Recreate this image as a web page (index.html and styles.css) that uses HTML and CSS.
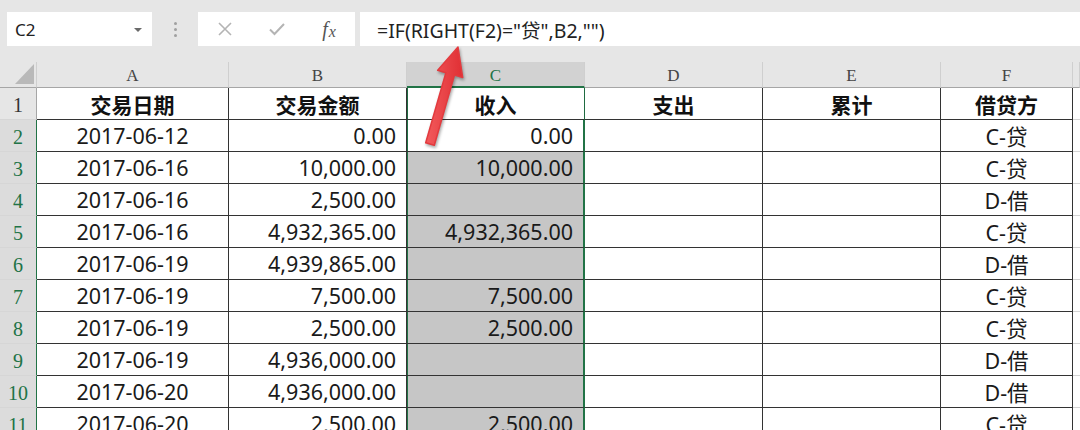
FILE: index.html
```html
<!DOCTYPE html>
<html lang="zh-CN">

<head>
    <meta charset="UTF-8">
    <link rel="stylesheet" href="styles.css">
    <title>借贷方 - 收入公式</title>
</head>

<body>
    <div class="app">
        <div class="toolbar">
            <div class="name-box">
                <span>C2</span>
                <span class="caret"></span>
            </div>
            <div class="grip"><i></i><i></i><i></i></div>
            <div class="fx-buttons">
                <span class="fx-btn">
                    <svg width="16" height="16" viewBox="0 0 16 16">
                        <path d="M2 2 L14 14 M14 2 L2 14" stroke="#b4b4b4" stroke-width="1.6" fill="none" />
                    </svg>
                </span>
                <span class="fx-btn">
                    <svg width="18" height="16" viewBox="0 0 18 16">
                        <path d="M2 8.5 L6.5 13 L16 3" stroke="#b4b4b4" stroke-width="2" fill="none" />
                    </svg>
                </span>
                <span class="fx-btn fx-label"><i>f</i><i class="x">x</i></span>
            </div>
            <div class="formula">=IF(RIGHT(F2)="贷",B2,"")</div>
        </div>

        <div class="sheet">
            <!-- 列标 -->
            <div class="corner"><span class="corner-mark"></span></div>
            <div class="col-head">A</div>
            <div class="col-head">B</div>
            <div class="col-head active">C</div>
            <div class="col-head">D</div>
            <div class="col-head">E</div>
            <div class="col-head">F</div>
            <div class="col-head blank"></div>

            <!-- 1 -->
            <div class="row-head">1</div>
            <div class="cell title">交易日期</div>
            <div class="cell title">交易金额</div>
            <div class="cell title c-col">收入</div>
            <div class="cell title">支出</div>
            <div class="cell title">累计</div>
            <div class="cell title">借贷方</div>
            <div class="cell empty"></div>

            <!-- 2 -->
            <div class="row-head sel">2</div>
            <div class="cell center">2017-06-12</div>
            <div class="cell num">0.00</div>
            <div class="cell num c-col picked current">0.00</div>
            <div class="cell"></div>
            <div class="cell"></div>
            <div class="cell center">C-贷</div>
            <div class="cell empty"></div>

            <!-- 3 -->
            <div class="row-head sel">3</div>
            <div class="cell center">2017-06-16</div>
            <div class="cell num">10,000.00</div>
            <div class="cell num c-col picked">10,000.00</div>
            <div class="cell"></div>
            <div class="cell"></div>
            <div class="cell center">C-贷</div>
            <div class="cell empty"></div>

            <!-- 4 -->
            <div class="row-head sel">4</div>
            <div class="cell center">2017-06-16</div>
            <div class="cell num">2,500.00</div>
            <div class="cell num c-col picked"></div>
            <div class="cell"></div>
            <div class="cell"></div>
            <div class="cell center">D-借</div>
            <div class="cell empty"></div>

            <!-- 5 -->
            <div class="row-head sel">5</div>
            <div class="cell center">2017-06-16</div>
            <div class="cell num">4,932,365.00</div>
            <div class="cell num c-col picked">4,932,365.00</div>
            <div class="cell"></div>
            <div class="cell"></div>
            <div class="cell center">C-贷</div>
            <div class="cell empty"></div>

            <!-- 6 -->
            <div class="row-head sel">6</div>
            <div class="cell center">2017-06-19</div>
            <div class="cell num">4,939,865.00</div>
            <div class="cell num c-col picked"></div>
            <div class="cell"></div>
            <div class="cell"></div>
            <div class="cell center">D-借</div>
            <div class="cell empty"></div>

            <!-- 7 -->
            <div class="row-head sel">7</div>
            <div class="cell center">2017-06-19</div>
            <div class="cell num">7,500.00</div>
            <div class="cell num c-col picked">7,500.00</div>
            <div class="cell"></div>
            <div class="cell"></div>
            <div class="cell center">C-贷</div>
            <div class="cell empty"></div>

            <!-- 8 -->
            <div class="row-head sel">8</div>
            <div class="cell center">2017-06-19</div>
            <div class="cell num">2,500.00</div>
            <div class="cell num c-col picked">2,500.00</div>
            <div class="cell"></div>
            <div class="cell"></div>
            <div class="cell center">C-贷</div>
            <div class="cell empty"></div>

            <!-- 9 -->
            <div class="row-head sel">9</div>
            <div class="cell center">2017-06-19</div>
            <div class="cell num">4,936,000.00</div>
            <div class="cell num c-col picked"></div>
            <div class="cell"></div>
            <div class="cell"></div>
            <div class="cell center">D-借</div>
            <div class="cell empty"></div>

            <!-- 10 -->
            <div class="row-head sel">10</div>
            <div class="cell center">2017-06-20</div>
            <div class="cell num">4,936,000.00</div>
            <div class="cell num c-col picked"></div>
            <div class="cell"></div>
            <div class="cell"></div>
            <div class="cell center">D-借</div>
            <div class="cell empty"></div>

            <!-- 11 -->
            <div class="row-head sel">11</div>
            <div class="cell center">2017-06-20</div>
            <div class="cell num">2,500.00</div>
            <div class="cell num c-col picked">2,500.00</div>
            <div class="cell"></div>
            <div class="cell"></div>
            <div class="cell center">C-贷</div>
            <div class="cell empty"></div>
        </div>

        <!-- 红色箭头标注 -->
        <svg class="arrow" width="1080" height="430" viewBox="0 0 1080 430">
            <defs>
                <linearGradient id="red" x1="0" y1="0" x2="1" y2="0">
                    <stop offset="0" stop-color="#f25a5c" />
                    <stop offset="1" stop-color="#e02f34" />
                </linearGradient>
            </defs>
            <polygon class="arrow-body"
                points="458,47 462.7,77.5 454.5,75.1 434.3,145.2 425.7,142.8 445.9,72.7 437.7,70.3" />
        </svg>
    </div>
</body>

</html>
```

FILE: styles.css
```css
body {
    margin: 0;
    background: #e6e6e6;
    overflow: hidden;
    font-family: "Noto Sans", "Noto Sans CJK SC", sans-serif;
    color: #1a1a1a;
}

.app {
    position: relative;
    width: 1080px;
    height: 430px;
    overflow: hidden;
}

/* 编辑栏 */
.toolbar {
    height: 62px;
    box-sizing: border-box;
    padding-top: 12px;
    display: flex;
    align-items: flex-start;
    background: #e6e6e6;
}

.name-box {
    margin-left: 7px;
    width: 145px;
    height: 34px;
    box-sizing: border-box;
    padding: 0 10px 0 8px;
    background: #fff;
    display: flex;
    align-items: center;
    justify-content: space-between;
    font-size: 17px;
    color: #222;
}

.caret {
    width: 0;
    height: 0;
    border-left: 4px solid transparent;
    border-right: 4px solid transparent;
    border-top: 4px solid #6a6a6a;
    margin-top: 2px;
}

.grip {
    width: 46px;
    height: 34px;
    display: flex;
    flex-direction: column;
    align-items: center;
    justify-content: center;
    gap: 3px;
}

.grip i {
    width: 3px;
    height: 3px;
    border-radius: 50%;
    background: #a0a0a0;
}

.fx-buttons {
    width: 157px;
    height: 34px;
    box-sizing: border-box;
    padding-left: 1px;
    background: #fff;
    display: flex;
    align-items: center;
}

.fx-btn {
    width: 52px;
    display: flex;
    justify-content: center;
    align-items: center;
}

.fx-label {
    font-family: "Liberation Serif", serif;
    font-size: 20px;
    color: #555;
}

.fx-label .x {
    font-size: 16px;
    margin-top: 5px;
    margin-left: 1px;
}

.formula {
    margin-left: 5px;
    flex: 1;
    height: 34px;
    box-sizing: border-box;
    padding-left: 17px;
    background: #fff;
    display: flex;
    align-items: center;
    font-size: 19.5px;
    color: #222;
}

/* 工作表 */
.sheet {
    display: grid;
    grid-template-columns: 37px 192px 178px 178px 178px 178px 132px 1fr;
    grid-template-rows: 26px repeat(11, 32px);
    background: #fff;
}

.sheet > div {
    box-sizing: border-box;
}

.corner {
    background: #e6e6e6;
    border-right: 1px solid #cfcfcf;
    border-bottom: 1px solid #a6a6a6;
    position: relative;
}

.corner-mark {
    position: absolute;
    right: 2px;
    bottom: 3px;
    width: 0;
    height: 0;
    border-left: 19px solid transparent;
    border-bottom: 20px solid #b9b9b9;
}

.col-head {
    background: #e6e6e6;
    border-right: 1px solid #cfcfcf;
    border-bottom: 1px solid #a6a6a6;
    display: flex;
    align-items: center;
    justify-content: center;
    padding-top: 3px;
    font-family: "Liberation Serif", serif;
    font-size: 17px;
    color: #444;
}

.col-head.active {
    background: #d2d2d2;
    color: #217346;
    border-bottom: 2px solid #217346;
}

.row-head {
    background: #e6e6e6;
    border-right: 1px solid #a6a6a6;
    border-bottom: 1px solid #d6d6d6;
    display: flex;
    align-items: center;
    justify-content: center;
    padding-top: 3px;
    font-family: "Liberation Serif", serif;
    font-size: 20px;
    color: #333;
}

.row-head.sel {
    background: #dcdcdc;
    color: #217346;
    border-right: 1px solid #217346;
}

.cell {
    border-right: 1px solid #333;
    border-bottom: 1px solid #333;
    display: flex;
    align-items: center;
    font-size: 21.5px;
    white-space: nowrap;
    overflow: hidden;
}

.cell.title {
    justify-content: center;
    font-weight: 700;
    font-size: 21px;
    color: #111;
}

.cell.center {
    justify-content: center;
}

.cell.num {
    justify-content: flex-end;
    padding-right: 10px;
}

.cell.empty {
    border-right: none;
    border-bottom: 1px solid #d4d4d4;
}

.cell.c-col {
    border-right-color: #1f6b41;
    box-shadow: inset 1px 0 #1f6b41;
}

.cell.picked {
    background: #c6c6c6;
    border-right: 2px solid #217346;
    box-shadow: inset 1px 0 #217346;
}

.cell.picked.current {
    background: #fff;
}

/* 标注箭头 */
.arrow {
    position: absolute;
    left: 0;
    top: 0;
    pointer-events: none;
}

.arrow-body {
    fill: url(#red);
    stroke: #e33a3e;
    stroke-width: 1.5;
    stroke-linejoin: round;
    filter: drop-shadow(1px 2px 1.5px rgba(0, 0, 0, 0.35));
}
```
